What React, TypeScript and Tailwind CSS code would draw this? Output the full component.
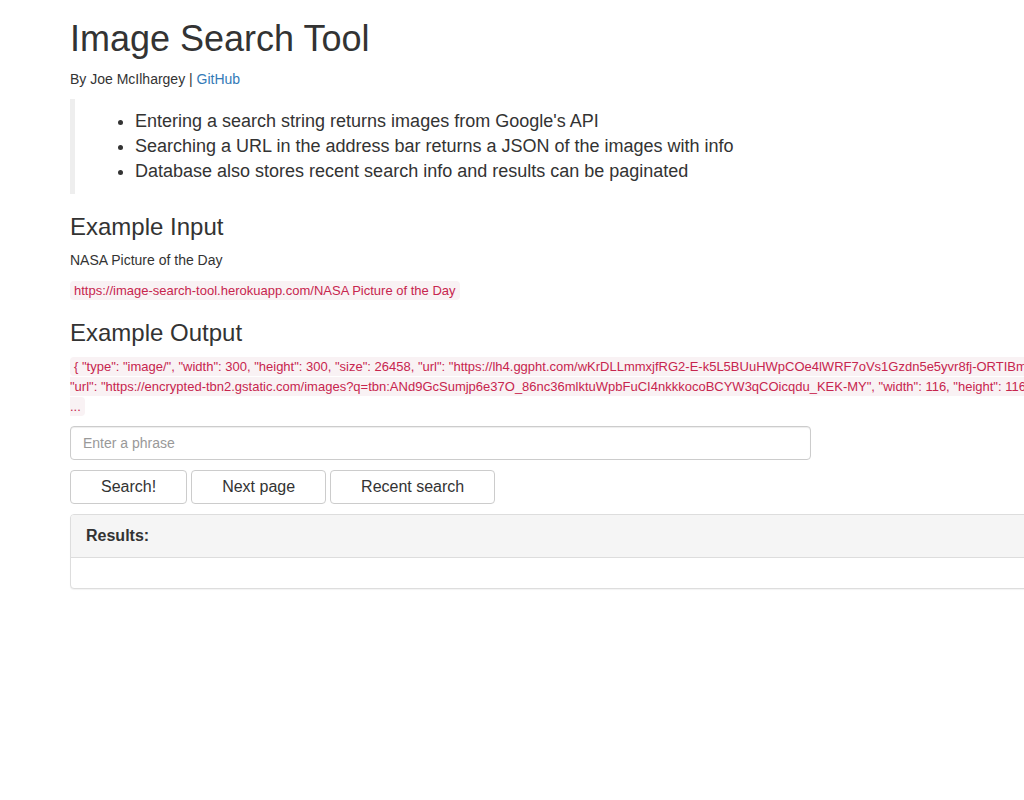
export default function App() {
  const font = { fontFamily: '"Liberation Sans", Arial, sans-serif' };

  return (
    <div className="w-full min-h-[800px] overflow-hidden bg-white text-[14px] leading-[20px] text-[#333]" style={font}>
      <div className="ml-[70px] w-[1140px]">
        {/* Header */}
        <h1 className="mt-[19px] mb-[10px] text-[36px] leading-[39.6px]">Image Search Tool</h1>
        <p className="mb-[10px]">
          By Joe McIlhargey | <a href="#" className="text-[#337ab7]">GitHub</a>
        </p>

        {/* Features */}
        <blockquote className="mb-[20px] border-l-[5px] border-[#eee] py-[10px] px-[20px] text-[18px] leading-[25px]">
          <ul className="list-disc pl-[40px]">
            <li>Entering a search string returns images from Google's API</li>
            <li>Searching a URL in the address bar returns a JSON of the images with info</li>
            <li>Database also stores recent search info and results can be paginated</li>
          </ul>
        </blockquote>

        {/* Example input */}
        <h3 className="mb-[10px] text-[24px] leading-[26.4px]">Example Input</h3>
        <p className="mb-[10px]">NASA Picture of the Day</p>
        <p className="mb-[10px] leading-[20px]">
          <code className="rounded-[4px] bg-[#f9f2f4] px-[4px] py-[2px] text-[13px] leading-none text-[#c7254e]" style={font}>
            https://image-search-tool.herokuapp.com/NASA Picture of the Day
          </code>
        </p>

        {/* Example output */}
        <h3 className="mt-[20px] mb-[10px] text-[24px] leading-[26.4px]">Example Output</h3>
        <p className="mb-[10px] whitespace-nowrap leading-[20px]">
          <code className="rounded-[4px] bg-[#f9f2f4] px-[4px] py-[2px] text-[13px] leading-none text-[#c7254e]" style={font}>
            {'{ "type": "image/", "width": 300, "height": 300, "size": 26458, "url": "https://lh4.ggpht.com/wKrDLLmmxjfRG2-E-k5L5BUuHWpCOe4lWRF7oVs1Gzdn5e5yvr8fj-ORTIBm1Ls9XkhR", "thumbnail": {'}
            <br />
            {'"url": "https://encrypted-tbn2.gstatic.com/images?q=tbn:ANd9GcSumjp6e37O_86nc36mlktuWpbFuCI4nkkkocoBCYW3qCOicqdu_KEK-MY", "width": 116, "height": 116 } }'}
            <br />
            ...
          </code>
        </p>

        {/* Search form */}
        <input
          type="text"
          placeholder="Enter a phrase"
          className="block h-[34px] w-[741px] rounded-[4px] border border-[#ccc] px-[12px] py-[6px] text-[14px] text-[#555] shadow-[inset_0_1px_1px_rgba(0,0,0,0.075)] outline-none placeholder:text-[#999]"
          style={font}
        />
        <div className="mt-[10px] flex gap-[4px]">
          {['Search!', 'Next page', 'Recent search'].map((label) => (
            <button
              key={label}
              type="button"
              className="h-[34px] rounded-[4px] border border-[#ccc] bg-white px-[30px] py-[6px] text-[16px] leading-[20px] text-[#333]"
              style={font}
            >
              {label}
            </button>
          ))}
        </div>

        {/* Results panel */}
        <div className="mt-[10px] mb-[20px] rounded-[4px] border border-[#ddd] bg-white shadow-[0_1px_1px_rgba(0,0,0,0.05)]">
          <div className="rounded-t-[3px] border-b border-[#ddd] bg-[#f5f5f5] px-[15px] py-[10px]">
            <h3 className="text-[16px] font-bold leading-[22px]">Results:</h3>
          </div>
          <div className="h-[30px] p-[15px]"></div>
        </div>
      </div>
    </div>
  );
}
